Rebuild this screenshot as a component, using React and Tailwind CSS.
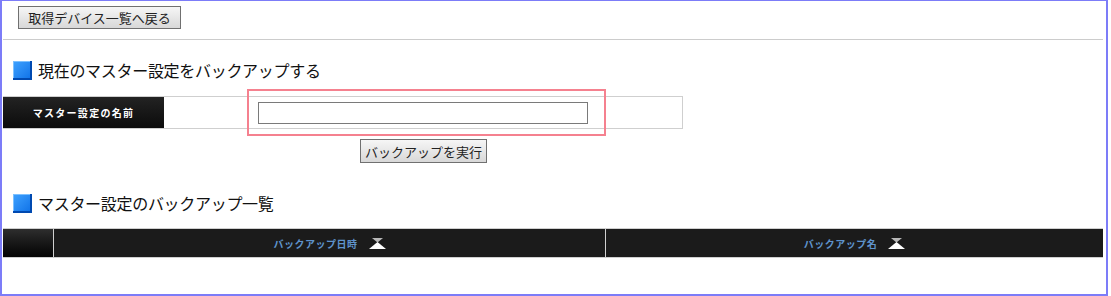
function GrayButton({ text, className }) {
  return (
    <button
      className={
        "flex items-center justify-center border border-[#707070] bg-gradient-to-b from-[#f6f6f6] to-[#d8d8d8] text-[13px] text-[#222] leading-none " +
        className
      }
    >
      {text}
    </button>
  );
}

function SectionTitle({ text, className }) {
  return (
    <div className={"flex items-center h-[19px] " + className}>
      <span className="ml-[10px] w-[19px] h-[19px] bg-gradient-to-br from-[#3ea2ff] to-[#0a6fe6] shadow-[inset_-2px_-2px_0_#0049b0,inset_1px_1px_0_#7cc0ff]" />
      <span className="ml-[6px] text-[16px] leading-[19px] tracking-[-0.3px] text-[#111]">{text}</span>
    </div>
  );
}

function SortIcon() {
  return (
    <svg width="17" height="11" viewBox="0 0 17 11" className="ml-[11px]">
      <polygon points="3,0 14,0 8.5,4.5" fill="#b8b8b8" />
      <polygon points="8.5,4 0,11 17,11" fill="#ffffff" />
    </svg>
  );
}

function HeaderCell({ text, className }) {
  return (
    <div className={"flex items-center justify-center " + className}>
      <span className="text-[10px] font-bold tracking-[0.5px] text-[#5f93cc]">{text}</span>
      <SortIcon />
    </div>
  );
}

export default function App() {
  return (
    <div className="relative w-[1108px] h-[296px] bg-white border-t border-l-2 border-r-2 border-b-2 border-[#7c7cf8] font-['Noto_Sans_CJK_JP','Noto_Sans_CJK_SC',sans-serif]">
      <div className="flex flex-col pl-[1px] pr-[3px]">
        <GrayButton text="取得デバイス一覧へ戻る" className="mt-[5px] ml-[15px] w-[163px] h-[23px]" />
        <div className="mt-[10px] h-px bg-[#cccccc]" />

        <SectionTitle text="現在のマスター設定をバックアップする" className="mt-[21px]" />

        <div className="mt-[16px] flex w-[680px] h-[33px] border-t border-b border-r border-[#cfcfcf]">
          <div className="w-[161px] flex items-center justify-center bg-gradient-to-b from-[#232323] to-[#0c0c0c]">
            <span className="text-[10px] font-bold tracking-[1.3px] text-white">マスター設定の名前</span>
          </div>
          <div className="flex-1 flex items-center justify-center">
            <input
              type="text"
              className="w-[330px] h-[22px] border border-[#7a7a7a] bg-white outline-none"
            />
          </div>
        </div>

        <GrayButton text="バックアップを実行" className="mt-[10px] ml-[357px] w-[127px] h-[24px]" />

        <SectionTitle text="マスター設定のバックアップ一覧" className="mt-[31px]" />

        <div className="mt-[15px] flex h-[30px] border-t border-b border-[#cfcfcf] bg-[#1b1b1b]">
          <div className="w-[50px] bg-gradient-to-b from-[#2e2e2e] to-[#050505]" />
          <HeaderCell text="バックアップ日時" className="w-[552px] border-l border-[#d0d0d0]" />
          <HeaderCell text="バックアップ名" className="flex-1 border-l border-[#d0d0d0]" />
        </div>
      </div>

      <div className="absolute left-[245px] top-[88px] w-[359px] h-[47px] border-2 border-[#f5818f]" />
    </div>
  );
}
